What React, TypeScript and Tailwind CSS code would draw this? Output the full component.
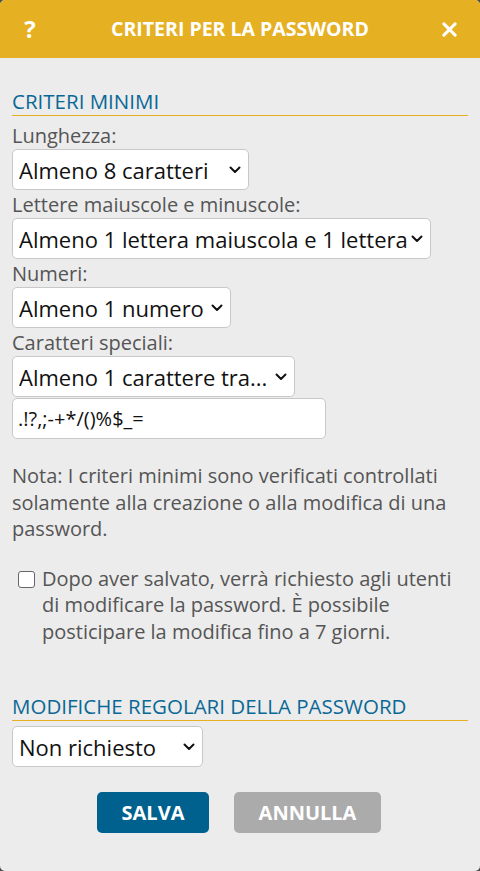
import React from "react";

const Chevron = () => (
  <svg width="12" height="8" viewBox="0 0 12 8" className="shrink-0">
    <path d="M1.5 1.5 L6 6 L10.5 1.5" fill="none" stroke="#111" strokeWidth="2" strokeLinecap="round" strokeLinejoin="round" />
  </svg>
);

function Select({ text, w }: { text: string; w: string }) {
  return (
    <div className={`${w} h-[41px] flex items-center bg-white border border-[#c8c8c8] rounded-[5px] pl-[6px] pr-[7px] gap-[3px]`}>
      <div className="flex-1 overflow-hidden whitespace-nowrap text-[22px] text-[#111] leading-[30px]">{text}</div>
      <Chevron />
    </div>
  );
}

function Label({ children }: { children: React.ReactNode }) {
  return <div className="text-[20px] text-[#555] leading-[27px] my-[0.5px]">{children}</div>;
}

export default function App() {
  return (
    <div className="w-[480px] h-[871px] bg-[#4a4a4a]" style={{ fontFamily: '"Open Sans", sans-serif' }}>
      <div className="w-full h-full bg-[#ececec] rounded-[5px] overflow-hidden flex flex-col">
        <div className="h-[58px] bg-[#e5b022] flex items-center justify-between pl-[22px] pr-[23px] text-white font-bold shrink-0">
          <span className="text-[24px] w-[16px] text-center leading-none">?</span>
          <span className="text-[19.5px]">CRITERI PER LA PASSWORD</span>
          <svg width="15" height="15" viewBox="0 0 16 16">
            <path d="M2 2 L14 14 M14 2 L2 14" stroke="white" strokeWidth="3.2" strokeLinecap="round" />
          </svg>
        </div>
        <div className="px-[12px] pt-[29px] flex flex-col">
          <div className="text-[20.5px] text-[#0a6896] border-b border-[#e5b022] leading-[28px]">CRITERI MINIMI</div>
          <div className="mt-[5px]">
            <Label>Lunghezza:</Label>
          </div>
          <Select text="Almeno 8 caratteri" w="w-[237px]" />
          <Label>Lettere maiuscole e minuscole:</Label>
          <Select text="Almeno 1 lettera maiuscola e 1 lettera minuscola" w="w-[419px]" />
          <Label>Numeri:</Label>
          <Select text="Almeno 1 numero" w="w-[219px]" />
          <Label>Caratteri speciali:</Label>
          <Select text="Almeno 1 carattere tra..." w="w-[283px]" />
          <div className="w-[314px] h-[41px] mt-[1px] flex items-center bg-white border border-[#c8c8c8] rounded-[5px] pl-[5px] text-[20px] text-[#111]">.!?,;-+*/()%$_=</div>
          <div className="text-[20px] text-[#555] leading-[26.5px] mt-[24px]">
            Nota: I criteri minimi sono verificati controllati solamente alla creazione o alla modifica di una password.
          </div>
          <div className="flex items-start mt-[23px] pl-[6px]">
            <div className="w-[17px] h-[17px] mt-[5px] border-[1.5px] border-[#666] rounded-[3px] bg-white shrink-0" />
            <div className="ml-[7px] text-[20px] text-[#555] leading-[26.5px]">
              Dopo aver salvato, verrà richiesto agli utenti di modificare la password. È possibile posticipare la modifica fino a 7 giorni.
            </div>
          </div>
          <div className="text-[20.5px] text-[#0a6896] border-b border-[#e5b022] leading-[28px] mt-[47px]">MODIFICHE REGOLARI DELLA PASSWORD</div>
          <div className="mt-[5px]">
            <Select text="Non richiesto" w="w-[191px]" />
          </div>
          <div className="flex justify-center gap-[25px] mt-[25px] pr-[2px]">
            <div className="w-[112px] h-[41px] rounded-[5px] bg-[#00618e] text-white font-bold text-[20px] flex items-center justify-center">SALVA</div>
            <div className="w-[147px] h-[41px] rounded-[5px] bg-[#ababab] text-white font-bold text-[20px] flex items-center justify-center">ANNULLA</div>
          </div>
        </div>
      </div>
    </div>
  );
}
